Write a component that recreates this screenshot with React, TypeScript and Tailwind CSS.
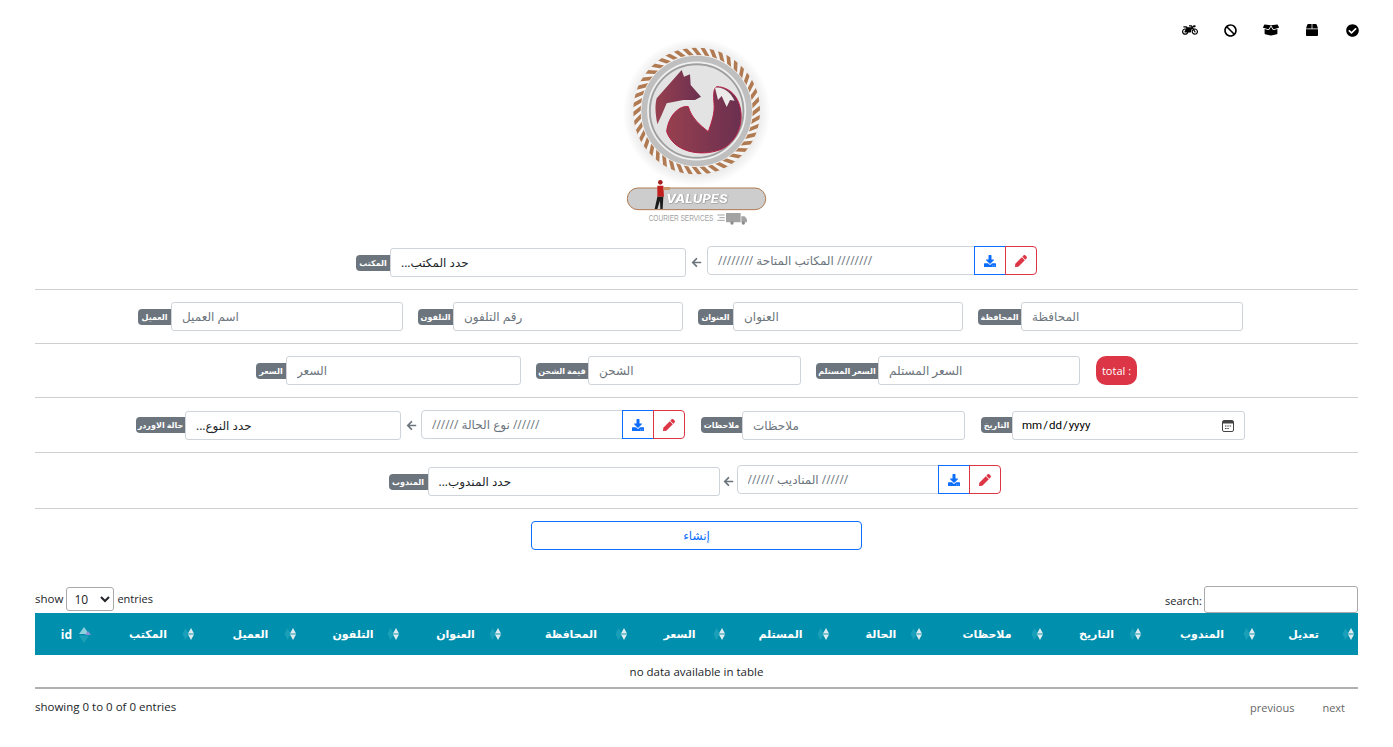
import React from "react";
import { FaMotorcycle, FaBan, FaBoxOpen, FaBox, FaCheckCircle, FaPen, FaDownload, FaArrowLeft } from "react-icons/fa";

function Badge({ w, children }: { w: string; children: React.ReactNode }) {
  return (
    <span dir="rtl" className={`${w} h-4 shrink-0 bg-[#6c757d] text-white text-[8px] font-bold leading-4 text-center rounded-l-[4px] whitespace-nowrap overflow-hidden`}>
      {children}
    </span>
  );
}

function Field({ badge, badgeW, inputW, ph }: { badge: string; badgeW: string; inputW: string; ph: string }) {
  return (
    <div className="flex items-center">
      <Badge w={badgeW}>{badge}</Badge>
      <input
        placeholder={ph}
        className={`${inputW} h-[29px] bg-white border border-[#ced4da] rounded-[3px] pl-[10px] text-[12px] text-black placeholder:text-[#6c757d] outline-none`}
      />
    </div>
  );
}

function FakeSelect({ badge, badgeW, w, text }: { badge: string; badgeW: string; w: string; text: string }) {
  return (
    <div className="flex items-center">
      <Badge w={badgeW}>{badge}</Badge>
      <div dir="rtl" className={`${w} h-[29px] border border-[#ced4da] rounded-[3px] pl-[10px] text-[12px] leading-[27px] text-left text-[#212529]`}>
        {text}
      </div>
    </div>
  );
}

function Group({ inputW, ph, arrowW, lift }: { inputW: string; ph: string; arrowW: string; lift: string }) {
  return (
    <div className="flex items-center">
      <span className={`${arrowW} flex justify-center text-[#6c757d]`}>
        <FaArrowLeft size={11} />
      </span>
      <div className={`flex h-[29px] ${lift}`}>
        <input
          placeholder={ph}
          className={`${inputW} h-[29px] border border-[#ced4da] rounded-l-[4px] pl-[10px] text-[12px] placeholder:text-[#6c757d] outline-none`}
        />
        <span className="w-[32px] h-[29px] -ml-px flex items-center justify-center border border-[#0d6efd] text-[#0d6efd]">
          <FaDownload size={12} />
        </span>
        <span className="w-[32px] h-[29px] -ml-px flex items-center justify-center border border-[#dc3545] rounded-r-[4px] text-[#dc3545]">
          <FaPen size={12} />
        </span>
      </div>
    </div>
  );
}

function Row({ className, children }: { className: string; children: React.ReactNode }) {
  return <div className={`flex items-center justify-center border-b border-[#cfcfcf] ${className}`}>{children}</div>;
}

function SortIcon({ active }: { active?: boolean }) {
  if (active) {
    return (
      <svg width="16" height="22" viewBox="0 0 16 22" className="absolute right-0 top-[11px]">
        <path d="M8 3 L13 10 H3 Z" fill="#8fd0dc" />
        <path d="M12 7 L15 11 H9 Z" fill="#8f8fd6" />
        <path d="M3 11.5 H13 L8 19 Z" fill="#1ba0b8" />
      </svg>
    );
  }
  return (
    <svg width="16" height="22" viewBox="0 0 16 22" className="absolute right-0 top-[10px]">
      <path d="M3.5 5 L0.5 11 L3.5 17 L7 11 Z" fill="#1a9fb9" />
      <path d="M9 5 L12 10.4 H6 Z" fill="#dcecef" />
      <path d="M9 17 L12 11.6 H6 Z" fill="#dcecef" />
      <path d="M6 11 H12" stroke="#86c4d1" strokeWidth="1" />
    </svg>
  );
}

const cols: [string, string, string][] = [
  ["id", "w-[57px]", "pl-[17px] pr-[11px] text-[12px]"],
  ["المكتب", "w-[106px]", "pl-[17px] pr-[11px] text-[11px]"],
  ["العميل", "w-[102px]", "pl-[14px] pr-[11px] text-[11px]"],
  ["التلفون", "w-[103px]", "pl-[14px] pr-[11px] text-[11px]"],
  ["العنوان", "w-[102px]", "pl-[14px] pr-[11px] text-[11px]"],
  ["المحافظة", "w-[126px]", "pl-[17px] pr-[11px] text-[11px]"],
  ["السعر", "w-[98px]", "pl-[10px] pr-[11px] text-[11px]"],
  ["المستلم", "w-[104px]", "pl-[10px] pr-[11px] text-[11px]"],
  ["الحالة", "w-[93px]", "pl-[14px] pr-[11px] text-[11px]"],
  ["ملاحظات", "w-[121px]", "pl-[12px] pr-[11px] text-[11px]"],
  ["التاريخ", "w-[98px]", "pl-[12px] pr-[11px] text-[11px]"],
  ["المندوب", "w-[114px]", "pl-[11px] pr-[11px] text-[11px]"],
  ["تعديل", "w-[99px]", "pl-[10px] pr-[20px] text-[11px]"],
];

function Rope() {
  const items = [];
  for (let i = 0; i < 44; i++) {
    const a = (i * 360) / 44;
    items.push(
      <rect key={i} x="264" y="44" width="52" height="11" fill="#b07a52" transform={`rotate(${a} 290 228) rotate(52 290 49)`} />
    );
  }
  return <g mask="url(#ropeMask)">{items}</g>;
}

function Logo() {
  return (
    <svg width="190" height="192" viewBox="0 9 570 576" className="mr-[3px]">
      <defs>
        <radialGradient id="glow" cx="50%" cy="50%" r="50%">
          <stop offset="80%" stopColor="#000" stopOpacity="0.1" />
          <stop offset="100%" stopColor="#000" stopOpacity="0" />
        </radialGradient>
        <linearGradient id="fox" x1="0" y1="0" x2="1" y2="0">
          <stop offset="0%" stopColor="#97404f" />
          <stop offset="100%" stopColor="#6b2f50" />
        </linearGradient>
        <mask id="ropeMask" maskUnits="userSpaceOnUse" x="0" y="0" width="570" height="585">
          <circle cx="290" cy="228" r="179" fill="none" stroke="#fff" strokeWidth="22" />
        </mask>
      </defs>
      <circle cx="290" cy="232" r="222" fill="url(#glow)" />
      <circle cx="290" cy="228" r="190" fill="#f4f4f4" />
      <Rope />
      <circle cx="290" cy="228" r="166" fill="#bfbfbf" />
      <circle cx="290" cy="228" r="146" fill="none" stroke="#f0f0f0" strokeWidth="5" />
      <circle cx="290" cy="228" r="140" fill="#e3e3e3" stroke="#9e9e9e" strokeWidth="5" />
      <path d="M170 190 L245 105 L252 125 L270 118 L272 150 L303 185 L285 195 L250 195 L200 205 L185 240 L172 268 C165 230 165 210 170 190 Z" fill="url(#fox)" />
      <path d="M200 290 C205 240 240 210 265 215 C275 250 300 270 325 290 C335 260 345 235 342 205 C340 180 340 160 350 155 C370 155 400 165 415 200 C435 250 420 310 370 340 C320 365 225 360 200 290 Z" fill="url(#fox)" stroke="#b51f45" strokeWidth="3" />
      <path d="M345 158 L354 195 L365 183 L380 216 L390 195 L404 197 C390 170 370 155 345 158 Z" fill="#ecebea" />
      <rect x="82" y="459" width="415" height="65" rx="32" fill="#cdcdcd" stroke="#b07a52" strokeWidth="3" />
      <circle cx="181" cy="442" r="7" fill="#a3201f" />
      <path d="M172 452 H190 L192 485 H172 Z" fill="#c1201f" />
      <path d="M190 456 H210 V465 H190 Z" fill="#c79a6b" />
      <path d="M172 485 H190 L188 522 H181 L180 497 L172 522 H164 Z" fill="#1c1c1c" />
      <text x="198" y="503" fontFamily="Inter, sans-serif" fontWeight="800" fontStyle="italic" fontSize="34" fill="#fff" textLength="185" lengthAdjust="spacingAndGlyphs" className="drop-shadow-[1px_1px_1px_#666]">VALUPES</text>
      <text x="146" y="558" fontFamily="'Liberation Sans', sans-serif" fontSize="29" fill="#a0a0a0" textLength="194" lengthAdjust="spacingAndGlyphs">COURIER SERVICES</text>
      <path d="M378 534 H422 V562 H378 Z M424 544 H434 L441 553 V562 H424 Z" fill="#a3a3a3" />
      <path d="M352 540 H374 M358 548 H374 M352 556 H374" stroke="#a3a3a3" strokeWidth="3" />
      <circle cx="396" cy="564" r="5" fill="#8c8c8c" />
      <circle cx="430" cy="564" r="5" fill="#8c8c8c" />
    </svg>
  );
}

const topIcons: [typeof FaBan, number][] = [
  [FaMotorcycle, 16],
  [FaBan, 13],
  [FaBoxOpen, 16],
  [FaBox, 12],
  [FaCheckCircle, 13],
];

export default function App() {
  return (
    <div className="min-h-[747px] bg-white text-[12px] text-[#212529] font-['Open_Sans','DejaVu_Sans',sans-serif]">
      <div className="flex justify-end pr-[20px] pt-[22px] text-black">
        {topIcons.map(([I, s], i) => (
          <span key={i} className="w-[40.7px] h-4 flex justify-center items-center">
            <I size={s} />
          </span>
        ))}
      </div>
      <div className="flex justify-center">
        <Logo />
      </div>
      <div className="px-[35px]">
        <Row className="h-[60px] pt-[6px]">
          <FakeSelect badge="المكتب" badgeW="w-[34px]" w="w-[296px]" text="حدد المكتب..." />
          <Group lift="mb-[4px]" arrowW="w-[21px]" inputW="w-[268px]" ph="//////// المكاتب المتاحة ////////" />
        </Row>
        <Row className="h-[54px] gap-[15px] pr-[12px]">
          <Field badge="العميل" badgeW="w-[33px]" inputW="w-[232px]" ph="اسم العميل" />
          <Field badge="التلفون" badgeW="w-[35px]" inputW="w-[230px]" ph="رقم التلفون" />
          <Field badge="العنوان" badgeW="w-[35px]" inputW="w-[230px]" ph="العنوان" />
          <Field badge="المحافظة" badgeW="w-[43px]" inputW="w-[222px]" ph="المحافظة" />
        </Row>
        <Row className="h-[54px] gap-[15px]">
          <Field badge="السعر" badgeW="w-[30px]" inputW="w-[235px]" ph="السعر" />
          <Field badge="قيمة الشحن" badgeW="w-[52px]" inputW="w-[213px]" ph="الشحن" />
          <Field badge="السعر المستلم" badgeW="w-[62px]" inputW="w-[202px]" ph="السعر المستلم" />
          <span className="ml-px w-[41px] h-[29px] rounded-[10px] bg-[#dc3545] text-white text-[11px] leading-[29px] text-center">total :</span>
        </Row>
        <Row className="h-[55px] pr-[12px]">
          <FakeSelect badge="حالة الاوردر" badgeW="w-[49px]" w="w-[216px]" text="حدد النوع..." />
          <Group lift="mb-[1px]" arrowW="w-[20px]" inputW="w-[202px]" ph="////// نوع الحالة //////" />
          <div className="ml-[16px]">
            <Field badge="ملاحظات" badgeW="w-[41px]" inputW="w-[223px]" ph="ملاحظات" />
          </div>
          <div className="ml-[16px] flex items-center">
            <Badge w="w-[31px]">التاريخ</Badge>
            <div className="relative">
              <input type="date" className="w-[233px] h-[29px] border border-[#ced4da] rounded-[3px] pl-[8px] pr-[10px] pt-[2px] text-[11.5px] text-black font-['Roboto',sans-serif] outline-none [&::-webkit-calendar-picker-indicator]:hidden" />
              <svg width="12" height="12" viewBox="0 0 12 12" className="absolute right-[11px] top-[9px]" fill="none">
                <rect x="0.5" y="0.5" width="11" height="11" rx="1.5" stroke="#444" />
                <rect x="1" y="1" width="10" height="2.5" fill="#444" />
                <path d="M3 6 H4.5 M5.3 6 H6.8 M7.6 6 H9.1 M3 8.5 H4.5 M5.3 8.5 H6.8" stroke="#444" />
              </svg>
            </div>
          </div>
        </Row>
        <Row className="h-[56px] pt-[2px] pr-[4px]">
          <FakeSelect badge="المندوب" badgeW="w-[39px]" w="w-[292px]" text="حدد المندوب..." />
          <Group lift="mb-[4px]" arrowW="w-[17px]" inputW="w-[202px]" ph="////// المناديب //////" />
        </Row>
        <div className="flex justify-center mt-[12px]">
          <button className="w-[331px] h-[29px] border border-[#0d6efd] rounded-[4px] text-[12px] text-[#0d6efd]">إنشاء</button>
        </div>
        <div className="flex justify-between items-start mt-[36px] h-[27px]">
          <label className="flex items-center gap-[3px] h-[26px] text-[11px]">
            <span className="text-[11.5px]">show</span>
            <select className="w-[48px] h-[24px] border border-[#aaa] rounded-[3px] pl-[3px] text-[12px] bg-white">
              <option>10</option>
            </select>
            entries
          </label>
          <label className="flex items-end gap-[2px] text-[11px] leading-[17px]">
            <span className="mb-[4px]">search:</span>
            <input className="w-[154px] h-[27px] border border-[#aaa] rounded-[3px] outline-none" />
          </label>
        </div>
        <table className="w-full table-fixed border-collapse">
          <colgroup>
            {cols.map(([t, w]) => (
              <col key={t} className={w} />
            ))}
          </colgroup>
          <thead>
            <tr className="h-[42px] bg-[#008fad] text-white">
              {cols.map(([t, , cls], i) => (
                <th key={t} className={`relative font-bold text-center pt-px ${cls}`}>
                  {t}
                  <SortIcon active={i === 0} />
                </th>
              ))}
            </tr>
          </thead>
          <tbody>
            <tr className="h-[33px] border-b-2 border-[#b0b0b0]">
              <td colSpan={13} className="text-center text-[11.5px] text-[#212529] pt-px">no data available in table</td>
            </tr>
          </tbody>
        </table>
        <div className="flex justify-between items-start mt-[9px]">
          <span className="text-[11.5px]">showing 0 to 0 of 0 entries</span>
          <span className="flex gap-[28px] pr-[13px] mt-[2px] text-[11px] text-[#666]">
            <span>previous</span>
            <span>next</span>
          </span>
        </div>
      </div>
    </div>
  );
}
